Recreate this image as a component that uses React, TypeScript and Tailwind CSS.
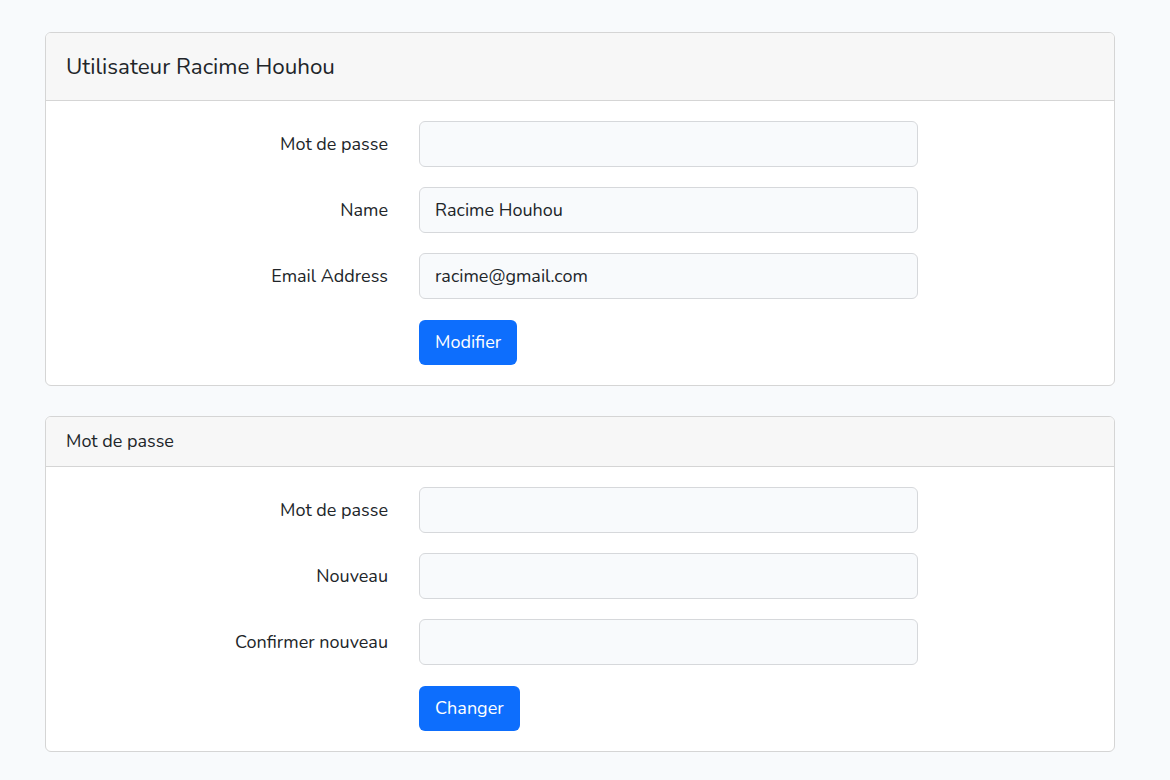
import React from "react";

const font = { fontFamily: 'Nunito, Lato, "Open Sans", sans-serif' };

function Field({ label, value }: { label: string; value?: string }) {
  return (
    <div className="flex items-center">
      <label className="w-[342px] text-right text-[18px] text-[#212529]">{label}</label>
      <div className="ml-[31px] flex h-[46px] w-[499px] items-center rounded-[6px] border border-[#d6d8db] bg-[#f8fafc] px-[15px] text-[18px] text-[#212529]">
        {value}
      </div>
    </div>
  );
}

function Card({
  title,
  titleClass,
  headerH,
  fields,
  button,
}: {
  title: string;
  titleClass: string;
  headerH: string;
  fields: { label: string; value?: string }[];
  button: string;
}) {
  return (
    <div className="w-[1070px] overflow-hidden rounded-[6px] border border-[#d5d5d5] bg-white">
      <div className={`flex items-center border-b border-[#d5d5d5] bg-[#f7f7f7] px-5 ${headerH}`}>
        <span className={`text-[#212529] ${titleClass}`}>{title}</span>
      </div>
      <div className="flex flex-col gap-5 pb-5 pt-5">
        {fields.map((f) => (
          <Field key={f.label} label={f.label} value={f.value} />
        ))}
        <div className="mt-px flex">
          <div className="ml-[373px]">
            <button className="h-[45px] rounded-[6px] bg-[#0d6efd] px-4 text-[18px] text-white">{button}</button>
          </div>
        </div>
      </div>
    </div>
  );
}

export default function App() {
  return (
    <div className="min-h-[780px] bg-[#f8fafc] pl-[45px] pt-8" style={font}>
      <div className="flex flex-col gap-[30px]">
        <Card
          title="Utilisateur Racime Houhou"
          titleClass="text-[22.4px]"
          headerH="h-[68px]"
          fields={[
            { label: "Mot de passe" },
            { label: "Name", value: "Racime Houhou" },
            { label: "Email Address", value: "racime@gmail.com" },
          ]}
          button="Modifier"
        />
        <Card
          title="Mot de passe"
          titleClass="text-[18px]"
          headerH="h-[50px]"
          fields={[{ label: "Mot de passe" }, { label: "Nouveau" }, { label: "Confirmer nouveau" }]}
          button="Changer"
        />
      </div>
    </div>
  );
}
